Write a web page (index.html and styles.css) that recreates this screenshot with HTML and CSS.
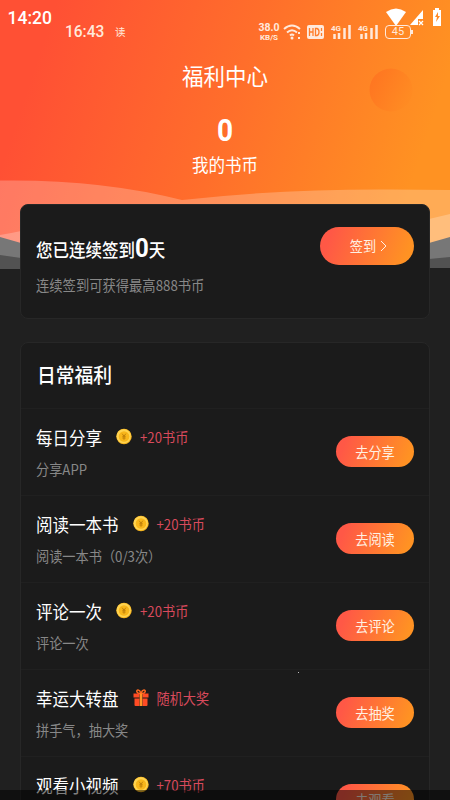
FILE: index.html
```html
<!DOCTYPE html>
<html lang="zh-CN">
<head>
<meta charset="utf-8">
<meta name="viewport" content="width=device-width, initial-scale=1">
<title>福利中心</title>
<link rel="stylesheet" href="styles.css">
</head>
<body>
<svg width="0" height="0" class="defs" aria-hidden="true">
  <symbol id="coin" viewBox="0 0 17 17">
    <circle cx="8.5" cy="8.5" r="8.2" fill="#f7b51e"/>
    <circle cx="8.2" cy="8.2" r="7.5" fill="#ffd451"/>
    <circle cx="8.5" cy="8.5" r="5.6" fill="#f8b61b"/>
    <path d="M6.5 5.5 8.500 8l2-2.500M8.500 8v4M6.700 8.300h3.600M6.700 10.100h3.600" fill="none" stroke="#b87908" stroke-width=".9"/>
  </symbol>
  <symbol id="gift" viewBox="0 0 16 17">
    <path d="M7.5 4.5C3 4.8 3 .8 5.2 1.1 7 1.3 7.5 3 8 4.4 8.5 3 9 1.3 10.8 1.1 13 .8 13 4.8 8.5 4.5" fill="none" stroke="#ff6a21" stroke-width="1.5"/>
    <path d="M.5 4.5h6v4h-6zM9.5 4.5h6v4h-6zM1.5 9.5h5V17h-4q-1 0-1-1zM9.5 9.5h5V16q0 1-1 1h-4z" fill="#ff4b24"/>
    <path d="M6.7 4.5h2.6V17H6.7z" fill="#ff9425"/>
  </symbol>
  <symbol id="signal" viewBox="0 0 20 16">
    <text x="-1" y="7" class="net-label">4G</text>
    <path d="M2.5 10v5M7 9v6M12.500 4v11M17.500 1v14" fill="none" stroke="currentColor" stroke-width="2.500"/>
  </symbol>
</svg>
<main class="screen">
  <svg class="backdrop" viewBox="0 0 450 272" aria-hidden="true">
    <defs>
      <linearGradient id="sky" gradientUnits="userSpaceOnUse" x1="20" y1="110" x2="395" y2="235">
        <stop offset="0" stop-color="#ff5034"/><stop offset=".5" stop-color="#ff6e2b"/><stop offset="1" stop-color="#ff9222"/>
      </linearGradient>
      <linearGradient id="orb" x1="0" y1="0" x2="1" y2=".5">
        <stop offset="0" stop-color="#ff6d20"/><stop offset="1" stop-color="#ff8a22"/>
      </linearGradient>
    </defs>
    <path fill="url(#sky)" d="M0 0H450V245H0z"/>
    <circle cx="391" cy="90" r="21.5" fill="url(#orb)" opacity=".75"/>
    <path fill="#fff" fill-opacity=".23" d="M0 180.500Q100 179 182 200 280 189 390 189.500L450 190V245H0z"/>
    <path fill="#fff" fill-opacity=".23" d="M0 235Q12 233 21 231V245H0zM429 219 450 214V245H429z"/>
    <path fill="#777" d="M0 237 21 243V266H0zM429 243 450 237V266H429z"/>
    <path fill="#525252" d="M0 255 21 258V269H0zM429 259 450 257V268H429z"/>
  </svg>
  <header class="status">
    <time class="clock">14:20</time>
    <div class="device">
      <svg width="56" height="18" viewBox="0 0 56 18">
        <path d="M0 4Q10-3 20 4L10 18z" fill="#fff"/>
        <path d="M24 17 37 2V11H32V17z" fill="#fff"/><path d="m33 13 4 4m0-4-4 4" stroke="#fff" stroke-width="1.3"/>
        <path d="M47 2h2V0h4v2h2v16h-8z" fill="#fff"/><path d="m52 4-3 5h2l-1 5 4-6h-2z" fill="#ff8b27"/>
      </svg>
    </div>
  </header>
  <div class="substatus">
    <time class="clock2">16:43</time><span class="reader">读</span>
    <div class="rate"><span>38.0</span><span>KB/S</span></div>
    <svg class="wifi" width="19" height="16" viewBox="0 0 19 16"><path d="M1 5Q9-2 17 5M4 8.500Q9 4 14 8.500M7 11.500Q9 9.500 11 11.500" fill="none" stroke="currentColor" stroke-width="1.900"/><circle cx="9" cy="14" r="1.500" fill="currentColor"/><path d="M16 8v2m0 3v2" stroke="currentColor" stroke-width="2"/></svg>
    <svg class="hd" width="17" height="14" viewBox="0 0 17 14"><rect width="17" height="14" rx="2" fill="currentColor"/><path d="M2.500 3v8M6 3v8M2.500 7H6M8.500 3.500H10Q12 4 12 7t-2 3.500H8.500zM14.500 3v3m0 2v3" fill="none" stroke="#ff7d2b" stroke-width="1.300"/></svg>
    <svg class="sig" width="20" height="16"><use href="#signal"/></svg>
    <svg class="sig sig-b" width="20" height="16"><use href="#signal"/></svg>
    <div class="battery">45</div>
  </div>
  <section class="hero">
    <h1>福利中心</h1>
    <strong>0</strong>
    <p>我的书币</p>
  </section>
  <section class="card checkin">
    <div>
      <h2>您已连续签到<b>0</b>天</h2>
      <p class="note">连续签到可获得最高888书币</p>
    </div>
    <button class="pill pill-large"><span>签到</span><svg width="7" height="12" viewBox="0 0 7 12"><path d="m1 1 5 5-5 5" fill="none" stroke="currentColor"/></svg></button>
  </section>
  <section class="card tasks">
    <h2>日常福利</h2>
    <article><div><h3><span>每日分享</span><svg width="16" height="17"><use href="#coin"/></svg><em>+20书币</em></h3><p class="note">分享APP</p></div><button class="pill"><span>去分享</span></button></article>
    <article><div><h3><span>阅读一本书</span><svg width="16" height="17"><use href="#coin"/></svg><em>+20书币</em></h3><p class="note">阅读一本书（0/3次）</p></div><button class="pill"><span>去阅读</span></button></article>
    <article><div><h3><span>评论一次</span><svg width="16" height="17"><use href="#coin"/></svg><em>+20书币</em></h3><p class="note">评论一次</p></div><button class="pill"><span>去评论</span></button></article>
    <article><div><h3><span>幸运大转盘</span><svg width="16" height="17"><use href="#gift"/></svg><em>随机大奖</em></h3><p class="note">拼手气，抽大奖</p></div><button class="pill"><span>去抽奖</span></button></article>
    <article><div><h3><span>观看小视频</span><svg width="16" height="17"><use href="#coin"/></svg><em>+70书币</em></h3></div><button class="pill"><span>去观看</span></button></article>
  </section>
  <div class="speck"></div>
  <div class="navbar"></div>
</main>
</body>
</html>
```

FILE: styles.css
```css
* { box-sizing: border-box; margin: 0; padding: 0; }
body { background: #202020; color: #fff; font-family: "Noto Sans CJK SC", sans-serif; }
.defs { position: absolute; }
.screen { position: relative; width: 450px; height: 800px; overflow: hidden; background: #202020; }
.backdrop { position: absolute; inset: 0 0 auto; width: 450px; height: 272px; }
.status, .substatus, .hero, .card { position: relative; }

.status { display: flex; justify-content: space-between; height: 22px; padding: 7px 8px 0 7px; }
.clock { font: 500 17.500px/20px Roboto, sans-serif; transform: translateX(.5px) scaleY(1.08); }
.device { height: 18px; }
.substatus { display: flex; align-items: center; height: 20px; padding-left: 65px; color: #ffe9dc; }
.clock2 { width: 50px; font: 500 15.500px/20px Roboto, sans-serif; transform: scaleY(1.08); }
.reader { width: 142px; font-size: 10.500px; line-height: 20px; }
.rate { display: flex; flex-direction: column; align-items: center; width: 24px; margin-right: 2px; font: 700 8px/9px Roboto, sans-serif; }
.rate span:first-child { font-size: 10.500px; line-height: 10px; }
.hd { margin-left: 5px; }
.sig { margin-left: 8px; overflow: visible; }
.sig-b { margin-left: 7px; }
#signal { overflow: visible; }
.net-label { font: 700 8px Roboto, sans-serif; fill: currentColor; }
.battery { position: relative; width: 26px; height: 14px; margin-left: 6px; border: 1px solid; border-radius: 4px; font: 400 11px/12px Roboto, sans-serif; text-align: center; }
.battery::after { content: ""; position: absolute; left: 25px; top: 4px; width: 2px; height: 4px; background: currentColor; }

.hero { height: 162px; text-align: center; }
.hero h1 { padding-top: 17px; font-size: 21.500px; font-weight: 400; line-height: 32px; transform: scaleY(1.05); }
.hero strong { display: block; margin-top: 24px; font: 700 28px/32px Roboto, sans-serif; transform: scaleY(1.1); }
.hero p { margin-top: 5px; font-size: 16.500px; line-height: 24px; transform: scaleY(1.08); }

.card { width: 410px; margin-left: 20px; border: 1px solid #272727; border-radius: 8px; background: #1b1b1b; }
.checkin { display: flex; justify-content: space-between; height: 115px; padding: 22px 15px 0; }
.checkin h2 { font-size: 16.500px; font-weight: 500; line-height: 42px; white-space: nowrap; transform: translateY(1px) scaleY(1.1); }
.checkin b { font: 700 24px/30px Roboto, sans-serif; }
.note { color: #888; font-size: 13.200px; line-height: 20px; transform: scaleY(1.08); }
.checkin .note { margin-top: 7px; font-size: 13.300px; }
.pill { display: flex; align-items: center; justify-content: center; gap: 4px; flex: none; width: 78px; height: 31px; border: 0; border-radius: 16px; background: linear-gradient(110deg, #ff5846 12%, #ff9223 90%); color: #fff1e3; font: 400 13.200px/20px "Noto Sans CJK SC", sans-serif; }
.pill span { transform: translateY(.5px) scaleY(1.08); }
.pill-large { width: 94px; height: 38px; padding-left: 3px; border-radius: 19px; }

.tasks { margin-top: 23px; }
.tasks > h2 { height: 65px; padding-left: 16px; font-size: 18.800px; font-weight: 500; line-height: 64px; transform: scaleY(1.06); }
.tasks article { display: flex; justify-content: space-between; height: 87px; padding: 16px 15px 0; border-top: 1px solid #202020; }
.tasks h3 { display: flex; align-items: center; height: 24px; font-size: 16.500px; font-weight: 400; line-height: 24px; }
.tasks h3 span { transform: scaleY(1.08); }
.tasks h3 svg { margin: 0 8px 2px 14px; }
.tasks h3 em { color: #d84a5c; font-size: 13.200px; font-style: normal; transform: translateY(.5px) scaleY(1.08); }
.tasks .note { margin-top: 11px; }
.tasks .pill { margin-top: 11px; }

.speck { position: absolute; left: 298px; top: 672px; width: 1px; height: 1px; background: #bbb; }
.navbar { position: absolute; inset: 790px 0 0; background: rgba(0, 0, 0, .5); }
```
